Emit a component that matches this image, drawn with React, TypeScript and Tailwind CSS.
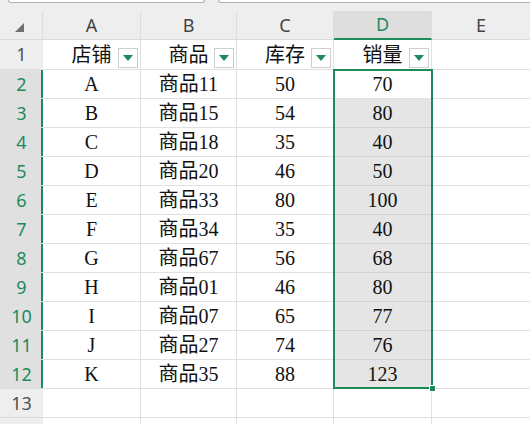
import React from 'react';

const rows = [
  ['A', '商品11', '50', '70'],
  ['B', '商品15', '54', '80'],
  ['C', '商品18', '35', '40'],
  ['D', '商品20', '46', '50'],
  ['E', '商品33', '80', '100'],
  ['F', '商品34', '35', '40'],
  ['G', '商品67', '56', '68'],
  ['H', '商品01', '46', '80'],
  ['I', '商品07', '65', '77'],
  ['J', '商品27', '74', '76'],
  ['K', '商品35', '88', '123'],
];

const heads = ['店铺', '商品', '库存', '销量'];
const widths = ['w-[98px]', 'w-[96px]', 'w-[97px]', 'w-[98px]'];

const cellFont = { fontFamily: '"Liberation Serif", "Noto Sans CJK SC", serif' };
const uiFont = { fontFamily: '"Noto Sans", "Liberation Sans", sans-serif' };

function FilterBtn() {
  return (
    <span className="absolute right-[2px] bottom-[1px] w-[20px] h-[20px] bg-white border border-[#cfcfcf] flex items-center justify-center">
      <svg width="10" height="6" viewBox="0 0 10 6">
        <path d="M0 0 H10 L5 6 Z" fill="#1d8a5c" />
      </svg>
    </span>
  );
}

function RowHead({ n, sel }: { n?: number; sel?: boolean }) {
  return (
    <div
      className={`relative w-[43px] shrink-0 h-full flex items-center justify-center text-[18px] border-b border-[#dcdcdc] ${
        sel ? 'bg-[#e0e0e0] text-[#1d8a5c]' : 'bg-[#eeeeee] text-[#505050]'
      }`}
      style={uiFont}
    >
      {n}
      {sel && <span className="absolute right-0 top-0 bottom-0 w-[2px] bg-[#1d8a5c]" />}
    </div>
  );
}

export default function App() {
  return (
    <div className="w-[530px] h-[424px] overflow-hidden bg-white relative select-none">
      {/* top strip (formula bar remnants) */}
      <div className="h-[11px] bg-[#eeeeee] flex items-start gap-[13px] pl-[8px]">
        <div className="w-[197px] h-[3px] bg-white border border-t-0 border-[#b0b0b0] rounded-b-[6px]" />
        <div className="flex-1 h-[3px] bg-white border border-t-0 border-r-0 border-[#b0b0b0] rounded-bl-[6px]" />
      </div>

      {/* column header */}
      <div className="flex h-[29px] bg-[#eeeeee]" style={uiFont}>
        <div className="w-[43px] shrink-0 relative border-r border-b border-[#dcdcdc]">
          <svg className="absolute left-[15px] top-[12px]" width="9" height="9" viewBox="0 0 9 9">
            <path d="M9 0 V9 H0 Z" fill="#707070" />
          </svg>
        </div>
        {['A', 'B', 'C', 'D'].map((c, i) => (
          <div
            key={c}
            className={`${widths[i]} shrink-0 flex items-center justify-center text-[18px] border-r ${
              c === 'D'
                ? 'bg-[#dedede] text-[#1d8a5c] border-b-2 border-b-[#1d8a5c] border-r-[#dcdcdc]'
                : 'text-[#444444] border-b border-[#dcdcdc]'
            }`}
          >
            {c}
          </div>
        ))}
        <div className="flex-1 flex items-center justify-center text-[18px] text-[#444444] border-b border-[#dcdcdc]">E</div>
      </div>

      {/* row 1: headers with filters */}
      <div className="flex h-[30px]">
        <RowHead n={1} />
        {heads.map((h, i) => (
          <div
            key={h}
            className={`${widths[i]} shrink-0 relative flex items-center justify-center text-[20px] text-[#111] border-r border-b border-[#e0e0e0]`}
            style={cellFont}
          >
            {h}
            <FilterBtn />
          </div>
        ))}
        <div className="flex-1 border-b border-[#e0e0e0]" />
      </div>

      {/* data rows */}
      {rows.map((r, ri) => (
        <div key={ri} className="flex h-[29px]">
          <RowHead n={ri + 2} sel />
          {r.map((v, ci) => (
            <div
              key={ci}
              className={`${widths[ci]} shrink-0 flex items-center justify-center text-[20px] text-[#111] border-r border-b ${
                ci === 3 && ri > 0 ? 'bg-[#e5e5e5] border-[#d2d2d2]' : 'border-[#e0e0e0]'
              }`}
              style={cellFont}
            >
              {v}
            </div>
          ))}
          <div className="flex-1 border-b border-[#e0e0e0]" />
        </div>
      ))}

      {/* rows 13, 14 */}
      {[13, 0].map((n) => (
        <div key={n} className="flex h-[29px]">
          <RowHead n={n || undefined} />
          {widths.map((w, i) => (
            <div key={i} className={`${w} shrink-0 border-r border-b border-[#e0e0e0]`} />
          ))}
          <div className="flex-1 border-b border-[#e0e0e0]" />
        </div>
      ))}

      {/* selection border D2:D12 */}
      <div className="absolute left-[333px] top-[69px] w-[100px] h-[320px] border-2 border-[#1d8a5c] pointer-events-none">
        <span className="absolute right-[-5px] bottom-[-5px] w-[7px] h-[7px] bg-[#1d8a5c] border border-white" />
      </div>
    </div>
  );
}
